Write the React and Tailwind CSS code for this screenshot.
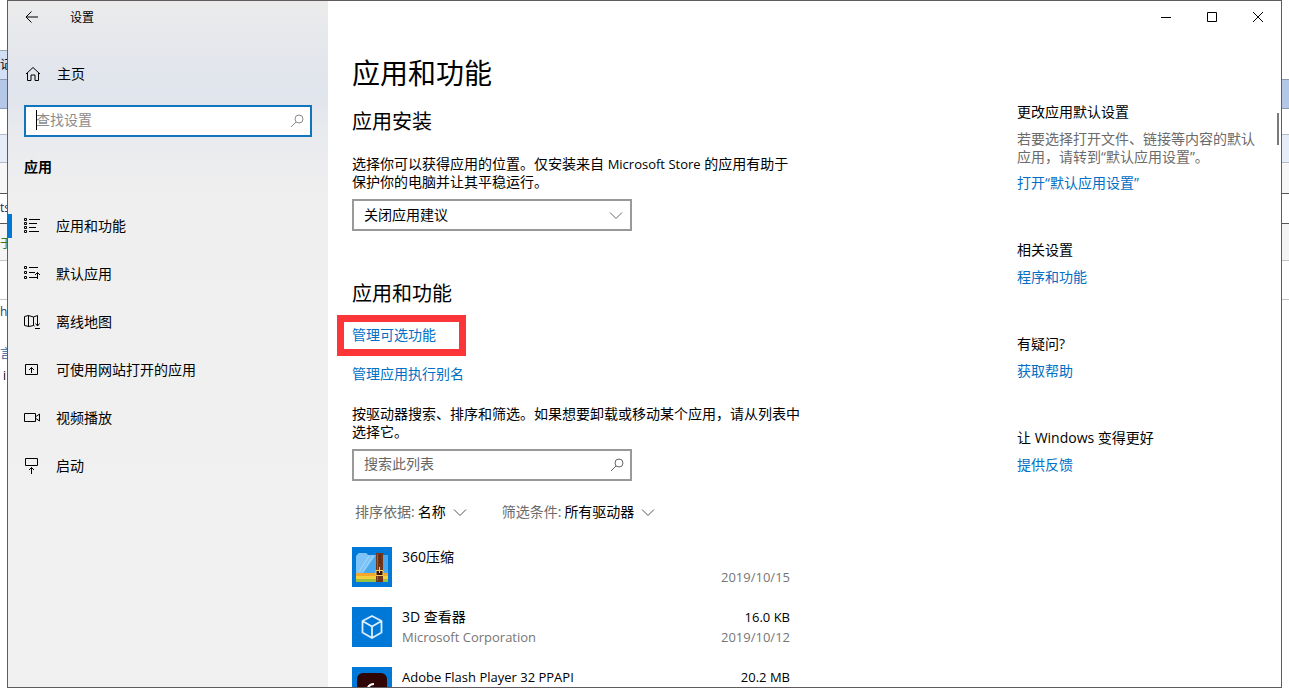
import React, { useState } from 'react';

const NAV_ITEMS = [
  { id: 'features', label: '应用和功能', icon: ListIcon },
  { id: 'defaults', label: '默认应用', icon: DefaultsIcon },
  { id: 'maps', label: '离线地图', icon: MapIcon },
  { id: 'websites', label: '可使用网站打开的应用', icon: WebsiteIcon },
  { id: 'video', label: '视频播放', icon: VideoIcon },
  { id: 'startup', label: '启动', icon: StartupIcon },
];

const APPS = [
  { name: '360压缩', publisher: '', size: '', date: '2019/10/15', icon: ZipLogo },
  { name: '3D 查看器', publisher: 'Microsoft Corporation', size: '16.0 KB', date: '2019/10/12', icon: CubeLogo },
  { name: 'Adobe Flash Player 32 PPAPI', publisher: '', size: '20.2 MB', date: '', icon: FlashLogo, latin: true },
];

const RELATED = [
  {
    title: '更改应用默认设置',
    text: '若要选择打开文件、链接等内容的默认应用，请转到“默认应用设置”。',
    link: '打开“默认应用设置”',
  },
  { title: '相关设置', link: '程序和功能' },
  { title: '有疑问?', link: '获取帮助' },
  { title: '让 Windows 变得更好', link: '提供反馈' },
];

function LineIcon({ children, className = 'size-4' }) {
  return (
    <svg viewBox="0 0 16 16" fill="none" stroke="currentColor" strokeWidth="1" className={`shrink-0 ${className}`} aria-hidden="true">
      {children}
    </svg>
  );
}

function ListIcon() {
  return (
    <LineIcon>
      <path d="M.5.5h2v2h-2zM.5 4.500h2v2h-2zM.5 8.500h2v2h-2zM.5 12.500h2v2h-2z" />
      <path d="M5 1.500h11M5 5.500h8M5 9.500h7M5 13.500h10" />
    </LineIcon>
  );
}

function DefaultsIcon() {
  return (
    <LineIcon>
      <path d="M.5.5h2v2h-2zM.5 5.500h2v2h-2zM.5 10.500h2v2h-2z" />
      <path d="M5 1.500h9M5 6.500h6M5 11.500h8M13.500 13V6.500M11 9l2.500-2.500L16 9" />
    </LineIcon>
  );
}

function MapIcon() {
  return (
    <LineIcon>
      <path d="M10.500 12 9.500 11.500 5 12.500.5 11.500V2.500L4.500 1.500l5 1.500 4-1.500V6M4.500 1.500v11M9.500 3v8.500" />
      <path d="M13.500 5v7M11.500 9.500l2 2.500 2-2.500M11 14.500h5" />
    </LineIcon>
  );
}

function WebsiteIcon() {
  return (
    <LineIcon>
      <path d="M1.500 2.500h12v10h-12zM7.500 11V5.500M5 8l2.500-2.500L10 8" />
    </LineIcon>
  );
}

function VideoIcon() {
  return (
    <LineIcon>
      <path d="M.5 3.500h11v8H.5zM12 6.500l3.500-2.500v7L12 8.500" />
    </LineIcon>
  );
}

function StartupIcon() {
  return (
    <LineIcon>
      <path d="M1.500.5h12v7h-12zM7.500 16V9.500M5 12l2.500-2.500L10 12" />
    </LineIcon>
  );
}

function HomeIcon() {
  return (
    <LineIcon>
      <path d="M1 8 8 1.500 15 8M2.500 7v7.500h3.500V9h4v5.500h3.500V7" />
    </LineIcon>
  );
}

function SearchIcon({ className }) {
  return (
    <LineIcon className={className}>
      <circle cx="10" cy="6" r="4" />
      <path d="M7 9 2 14" />
    </LineIcon>
  );
}

function Chevron({ className }) {
  return (
    <LineIcon className={className}>
      <path d="M2 5.500 8 11.500 14 5.500" />
    </LineIcon>
  );
}

function ZipLogo() {
  return (
    <svg viewBox="0 0 40 40" className="size-10" aria-hidden="true">
      <path d="M4 30V9l3-3h7l2 2h20v22z" fill="#4aa8ee" />
      <path d="M4 9l3-3h7l2 2h8L11 26H4z" fill="#7cc4f7" />
      <path d="M17 9 7 25M21 9 11 25" stroke="#a5d8fa" strokeWidth="1" />
      <path d="M4 26h32v3H4z" fill="#f5a92c" />
      <path d="M4 29h32v3H4z" fill="#f2cf3f" />
      <path d="M4 32h32v3H4z" fill="#9cc13f" />
      <path d="M24 6h7v29h-7z" fill="#71351a" />
      <path d="M25.500 7v27" stroke="#a35a2c" />
      <path d="M28 8v9" stroke="#4a200d" strokeWidth="1" strokeDasharray="2 1" />
      <path d="M24 23.500h7v5h-7z" fill="#3a1609" stroke="#f7cf63" strokeWidth="1" />
      <path d="M27.500 20v6" stroke="#f7cf63" strokeWidth="1" />
    </svg>
  );
}

function CubeLogo() {
  return (
    <svg viewBox="0 0 40 40" fill="none" stroke="#dcefff" strokeWidth="1.800" strokeLinejoin="round" className="size-10" aria-hidden="true">
      <path d="M20 9l9.500 5v11.500L20 31l-9.500-5.500V14zM10.500 14 20 19.500 29.500 14M20 19.500V31" />
    </svg>
  );
}

function FlashLogo() {
  return (
    <svg viewBox="0 0 40 40" className="size-10" aria-hidden="true">
      <rect x="5" y="6" width="30" height="30" rx="6" fill="#300506" />
      <path d="M22 17c-4 0-6 2-7 6S13 29 10 29M15 22h5" stroke="#fff" strokeWidth="2" fill="none" />
    </svg>
  );
}

// Edge of the spreadsheet that lies behind the settings window
function BackdropRows({ top, cells = [] }) {
  return (
    <div className="w-[7px] shrink-0 overflow-hidden bg-white text-xs whitespace-nowrap" aria-hidden="true">
      {top}
      <div className="h-[30px] border-y border-[#8d99ae] bg-[#b4c7e7]" />
      <div className="h-[25px]" />
      <div className="h-[29px] border-y border-[#b5bac4] bg-[#e6edf8]" />
      <div className="h-[31px] border-b border-[#555555] bg-[#f7f7f7]" />
      <div className="h-[30px] border-b border-[#555555] leading-7 text-[#2d1a5a]">{cells[0]}</div>
      <div className="h-[37px] border-b border-[#c4c4c4] bg-[#f5f5f5] leading-10 text-[#2f7d1f]">{cells[1]}</div>
      <div className="h-[39px] border-b border-[#c4c4c4]" />
      <div className="h-[42px] leading-6 text-[#2c3c66]">{cells[2]}</div>
      <div className="h-[22px] leading-6 text-[#2f5f9e]">{cells[3]}</div>
      <div className="h-[22px] leading-6">{cells[4]}</div>
    </div>
  );
}

function Sidebar() {
  const [active, setActive] = useState('features');

  return (
    <aside className="flex w-80 shrink-0 flex-col bg-[linear-gradient(180deg,#ebebeb_0px,#e5e7ec_50px,#e0e4ec_90px,#eaebee_140px,#efefef_200px,#f1f1f1_100%)]">
      <header className="flex h-8 items-center">
        <button type="button" aria-label="返回" className="flex w-12 justify-center">
          <LineIcon>
            <path d="M14 8H2M7.500 2.500 2 8l5.500 5.500" />
          </LineIcon>
        </button>
        <span className="ml-[14px] pt-px text-xs">设置</span>
      </header>

      <a href="#home" className="mt-[25px] flex h-8 items-center gap-4 pl-[17px]">
        <HomeIcon />
        主页
      </a>

      <div className="relative mx-4 mt-[15px]">
        <input
          type="search"
          aria-label="查找设置"
          placeholder="查找设置"
          className="block h-8 w-full border-2 border-[#0f75bc] bg-white px-[10px] pb-1 outline-none placeholder:text-[#8c8c8c]"
        />
        <span className="absolute top-[5px] left-3 h-5 w-px bg-black" />
        <SearchIcon className="absolute top-2 right-[7px] size-4 text-[#8c8c8c]" />
      </div>

      <h2 className="mt-5 px-4 leading-5 font-bold">应用</h2>

      <nav className="mt-[25px]">
        {NAV_ITEMS.map(({ id, label, icon: Icon }) => (
          <a key={id} href={`#${id}`} onClick={() => setActive(id)} className="flex h-12 items-center">
            <span className={`h-6 w-1 ${active === id ? 'bg-[#0078d7]' : ''}`} />
            <span className="ml-3 flex items-center gap-4">
              <Icon />
              {label}
            </span>
          </a>
        ))}
      </nav>
    </aside>
  );
}

function WindowButtons() {
  return (
    <header className="flex h-8 shrink-0 justify-end">
      <button type="button" aria-label="最小化" className="flex w-[46px] items-center justify-center">
        <LineIcon>
          <path d="M3 8.500h10" />
        </LineIcon>
      </button>
      <button type="button" aria-label="最大化" className="flex w-[46px] items-center justify-center">
        <LineIcon>
          <path d="M3.500 3.500h9v9h-9z" />
        </LineIcon>
      </button>
      <button type="button" aria-label="关闭" className="flex w-[46px] items-center justify-center">
        <LineIcon>
          <path d="M3 3l10 10M13 3 3 13" />
        </LineIcon>
      </button>
    </header>
  );
}

function InlineSelect({ id, label, value }) {
  return (
    <div className="flex items-center">
      <label htmlFor={id} className="text-[#6b6b6b]">{label}</label>
      <select id={id} className="ml-[3px] field-sizing-content appearance-none bg-transparent">
        <option>{value}</option>
      </select>
      <Chevron className="ml-[6px] size-4 text-[#555555]" />
    </div>
  );
}

function AppRow({ app }) {
  const Icon = app.icon;
  return (
    <li className="flex h-[60px]">
      <div className="size-10 shrink-0 bg-[#0078d7]">
        <Icon />
      </div>
      <div className="ml-[10px] flex-1 leading-5">
        <div className={app.latin ? 'text-[13px] leading-5' : ''}>{app.name}</div>
        <div className="text-[13px] leading-5 text-[#767676]">{app.publisher}</div>
      </div>
      <div className="text-right text-[13px] leading-5">
        <div className="min-h-5">{app.size}</div>
        <div className="text-[#767676]">{app.date}</div>
      </div>
    </li>
  );
}

function AppsPage() {
  return (
    <main className="flex-1 pl-6">
      <div className="max-w-[448px]">
        <h1 className="mt-[22px] text-[28px] leading-9">应用和功能</h1>

        <h2 className="mt-[19px] text-xl leading-6">应用安装</h2>
        <p className="mt-[21px] leading-[18px]">
          选择你可以获得应用的位置。仅安装来自 <span className="text-[13px]">Microsoft Store</span> 的应用有助于保护你的电脑并让其平稳运行。
        </p>
        <div className="relative mt-2 w-[280px]">
          <select aria-label="应用安装" className="block h-8 w-full appearance-none border-2 border-[#999999] bg-white px-[10px]">
            <option>关闭应用建议</option>
          </select>
          <Chevron className="pointer-events-none absolute top-2 right-2 size-4 text-[#666666]" />
        </div>

        <h2 className="mt-[51px] text-xl leading-6">应用和功能</h2>
        <div className="mt-[19px] flex flex-col items-start gap-[19px] leading-5 text-[#006fc4]">
          <a href="#optional" className="relative">
            管理可选功能
            <span className="pointer-events-none absolute -top-[10px] -left-[15px] h-[41px] w-[129px] border-[7px] border-[#fb3538]" />
          </a>
          <a href="#aliases">管理应用执行别名</a>
        </div>
        <p className="mt-[21px] leading-[18px]">
          按驱动器搜索、排序和筛选。如果想要卸载或移动某个应用，请从列表中选择它。
        </p>
        <div className="relative mt-2 w-[280px]">
          <input
            type="search"
            aria-label="搜索此列表"
            placeholder="搜索此列表"
            className="block h-8 w-full border-2 border-[#999999] bg-white px-[10px] pb-1 placeholder:text-[#666666]"
          />
          <SearchIcon className="absolute top-2 right-[7px] size-4 text-[#666666]" />
        </div>

        <div className="mt-[21px] flex gap-[34px] pl-[3px] leading-5">
          <InlineSelect id="sort" label="排序依据:" value="名称" />
          <InlineSelect id="filter" label="筛选条件:" value="所有驱动器" />
        </div>

        <ul className="mt-[25px] mr-[10px]">
          {APPS.map((app) => (
            <AppRow key={app.name} app={app} />
          ))}
        </ul>
      </div>
    </main>
  );
}

function RelatedPanel() {
  return (
    <aside className="mt-[69px] flex w-[264px] shrink-0 flex-col gap-[47px] pr-6">
      {RELATED.map((item) => (
        <section key={item.title}>
          <h3 className="leading-5">{item.title}</h3>
          {item.text && <p className="mt-2 leading-[18px] text-[#6b6b6b]">{item.text}</p>}
          <a href="#related" className="mt-[7px] block leading-5 text-[#006fc4]">{item.link}</a>
        </section>
      ))}
    </aside>
  );
}

export default function App() {
  return (
    <div className="flex h-screen overflow-hidden bg-white pb-[7px] font-['Open_Sans','Noto_Sans_CJK_SC',sans-serif] text-sm text-black">
      <BackdropRows
        top={
          <>
            <div className="h-[50px]" />
            <div className="h-[29px] border-t border-[#9aa5b8] bg-[#d3dff4] leading-7">记</div>
          </>
        }
        cells={['ts', '于', 'h', '言', <span className="pl-[3px]">i</span>]}
      />

      <div className="relative flex min-w-0 flex-1 overflow-hidden border border-[#5f5b5e] bg-white">
        <Sidebar />
        <div className="flex min-w-0 flex-1 flex-col">
          <WindowButtons />
          <div className="flex min-h-0 flex-1">
            <AppsPage />
            <RelatedPanel />
          </div>
        </div>
        <span className="absolute top-28 right-[2px] h-8 w-[2px] bg-[#7a7a7a]" />
      </div>

      <BackdropRows top={<div className="h-[79px]" />} />
    </div>
  );
}
